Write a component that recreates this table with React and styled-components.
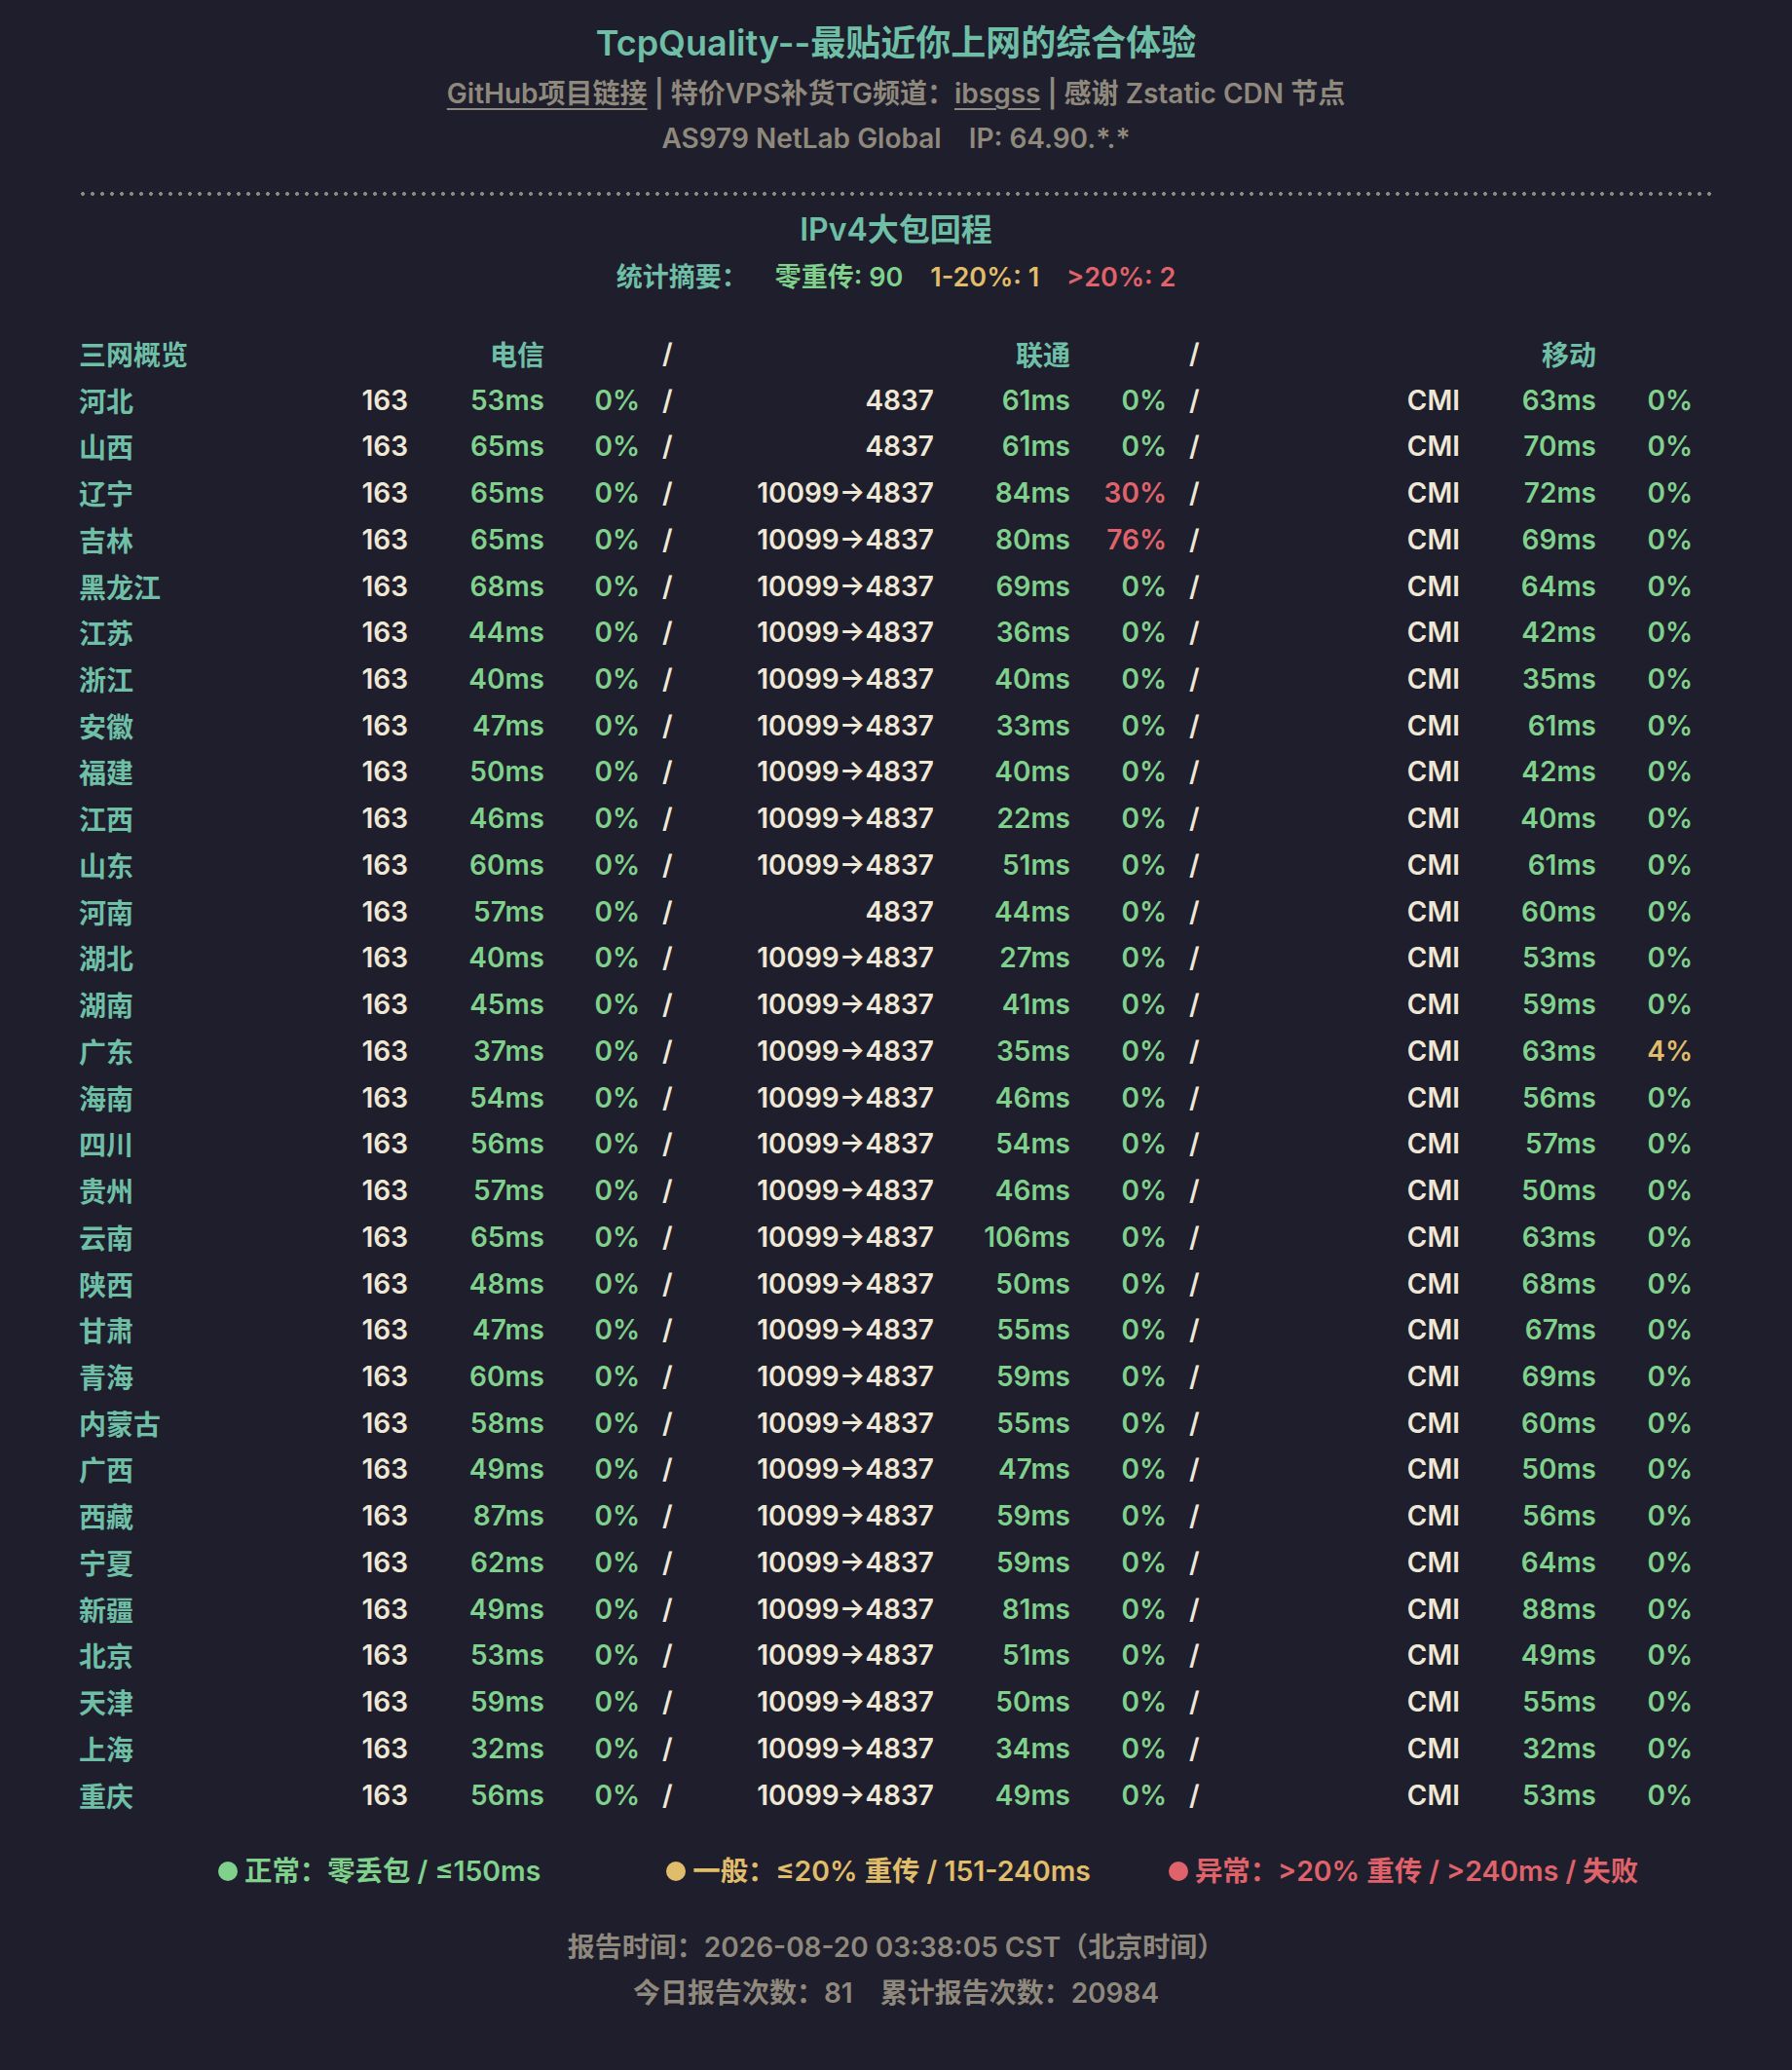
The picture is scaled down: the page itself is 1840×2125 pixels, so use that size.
import React from 'react'
import styled, { createGlobalStyle } from 'styled-components'

const colors = {
  bg: '#1f1e2c',
  teal: '#6ebfa6',
  green: '#7fd18c',
  cream: '#efe8d6',
  gray: '#8f897d',
  red: '#e0636b',
  yellow: '#e0bd6b',
}

const GlobalStyle = createGlobalStyle`
  html, body {
    margin: 0;
    padding: 0;
    background: ${colors.bg};
  }
  body {
    font-family: Inter, "Noto Sans CJK SC", sans-serif;
    font-weight: 600;
  }
`

const Page = styled.div`
  width: 1840px;
  box-sizing: border-box;
  padding: 21px 80px 55px;
  color: ${colors.cream};
`

const Title = styled.h1`
  margin: 0;
  font-size: 36px;
  line-height: 46px;
  font-weight: 600;
  text-align: center;
  color: ${colors.teal};
`

const SubLine = styled.div`
  margin-top: ${(p) => p.$mt || 0}px;
  font-size: 28px;
  line-height: 46px;
  text-align: center;
  color: ${colors.gray};
  white-space: pre;
`

const UnderLink = styled.a`
  color: inherit;
  text-decoration: underline;
  text-decoration-thickness: 2px;
  text-underline-offset: 5px;
`

const Spacer = styled.span`
  display: inline-block;
  width: ${(p) => p.$w}px;
`

const Divider = styled.div`
  margin-top: 32px;
  height: 4px;
  background-image: radial-gradient(circle, ${colors.gray} 1.8px, transparent 2.2px);
  background-size: 10px 4px;
  background-repeat: repeat-x;
  background-position: 0 0;
`

const SectionTitle = styled.h2`
  margin: 13px 0 0;
  font-size: 32px;
  line-height: 44px;
  font-weight: 600;
  text-align: center;
  color: ${colors.teal};
`

const Summary = styled.div`
  margin-top: 5px;
  display: flex;
  justify-content: center;
  gap: 28px;
  font-size: 27px;
  line-height: 44px;
`

const Tone = styled.span`
  color: ${(p) => colors[p.$tone]};
  white-space: pre;
`

const Table = styled.div`
  margin-top: 32px;
  padding-left: 1px;
  display: grid;
  grid-template-columns: 138px 200px 140px 98px 60px 242px 140px 99px 60px 241px 140px 99px;
  grid-auto-rows: 47.74px;
  align-items: center;
  font-size: 28px;
`

const Cell = styled.div`
  text-align: ${(p) => (p.$left ? 'left' : 'right')};
  color: ${(p) => colors[p.$tone || 'cream']};
  white-space: nowrap;
`

const Slash = styled.div`
  padding-left: 23px;
  color: ${colors.cream};
`

const Legend = styled.div`
  margin-top: 32px;
  padding-left: 144px;
  display: flex;
  align-items: center;
  font-size: 28.4px;
  line-height: 44px;
`

const LegendItem = styled.div`
  display: flex;
  align-items: center;
  gap: 7px;
  margin-right: ${(p) => p.$mr || 0}px;
  color: ${(p) => colors[p.$tone]};
  white-space: pre;
`

const Dot = styled.span`
  width: 20px;
  height: 20px;
  border-radius: 50%;
  background: ${(p) => colors[p.$tone]};
`

const Footer = styled.div`
  margin-top: 33px;
  text-align: center;
  color: ${colors.gray};
  font-size: 28px;
  line-height: 47px;
  white-space: pre;
`

const rows = [
  ['河北', 53, 0, false, 61, 0, 63, 0],
  ['山西', 65, 0, false, 61, 0, 70, 0],
  ['辽宁', 65, 0, true, 84, 30, 72, 0],
  ['吉林', 65, 0, true, 80, 76, 69, 0],
  ['黑龙江', 68, 0, true, 69, 0, 64, 0],
  ['江苏', 44, 0, true, 36, 0, 42, 0],
  ['浙江', 40, 0, true, 40, 0, 35, 0],
  ['安徽', 47, 0, true, 33, 0, 61, 0],
  ['福建', 50, 0, true, 40, 0, 42, 0],
  ['江西', 46, 0, true, 22, 0, 40, 0],
  ['山东', 60, 0, true, 51, 0, 61, 0],
  ['河南', 57, 0, false, 44, 0, 60, 0],
  ['湖北', 40, 0, true, 27, 0, 53, 0],
  ['湖南', 45, 0, true, 41, 0, 59, 0],
  ['广东', 37, 0, true, 35, 0, 63, 4],
  ['海南', 54, 0, true, 46, 0, 56, 0],
  ['四川', 56, 0, true, 54, 0, 57, 0],
  ['贵州', 57, 0, true, 46, 0, 50, 0],
  ['云南', 65, 0, true, 106, 0, 63, 0],
  ['陕西', 48, 0, true, 50, 0, 68, 0],
  ['甘肃', 47, 0, true, 55, 0, 67, 0],
  ['青海', 60, 0, true, 59, 0, 69, 0],
  ['内蒙古', 58, 0, true, 55, 0, 60, 0],
  ['广西', 49, 0, true, 47, 0, 50, 0],
  ['西藏', 87, 0, true, 59, 0, 56, 0],
  ['宁夏', 62, 0, true, 59, 0, 64, 0],
  ['新疆', 49, 0, true, 81, 0, 88, 0],
  ['北京', 53, 0, true, 51, 0, 49, 0],
  ['天津', 59, 0, true, 50, 0, 55, 0],
  ['上海', 32, 0, true, 34, 0, 32, 0],
  ['重庆', 56, 0, true, 49, 0, 53, 0],
]

const msTone = (ms) => (ms <= 150 ? 'green' : ms <= 240 ? 'yellow' : 'red')
const pctTone = (p) => (p === 0 ? 'green' : p <= 20 ? 'yellow' : 'red')

function Carrier({ asn, ms, pct }) {
  return (
    <>
      <Cell>{asn}</Cell>
      <Cell $tone={msTone(ms)}>{ms}ms</Cell>
      <Cell $tone={pctTone(pct)}>{pct}%</Cell>
    </>
  )
}

function App() {
  return (
    <Page>
      <GlobalStyle />
      <Title>TcpQuality--最贴近你上网的综合体验</Title>
      <SubLine $mt={6}>
        <UnderLink href="#">GitHub项目链接</UnderLink> | 特价VPS补货TG频道：<UnderLink href="#">ibsgss</UnderLink> | 感谢 Zstatic CDN 节点
      </SubLine>
      <SubLine>
        AS979 NetLab Global<Spacer $w={28} />IP: 64.90.*.*
      </SubLine>

      <Divider />

      <SectionTitle>IPv4大包回程</SectionTitle>
      <Summary>
        <Tone $tone="teal">统计摘要：</Tone>
        <Tone $tone="green">零重传: 90</Tone>
        <Tone $tone="yellow">1-20%: 1</Tone>
        <Tone $tone="red">&gt;20%: 2</Tone>
      </Summary>

      <Table>
        <Cell $left $tone="teal">三网概览</Cell>
        <Cell />
        <Cell $tone="teal">电信</Cell>
        <Cell />
        <Slash>/</Slash>
        <Cell />
        <Cell $tone="teal">联通</Cell>
        <Cell />
        <Slash>/</Slash>
        <Cell />
        <Cell $tone="teal">移动</Cell>
        <Cell />
        {rows.map(([name, tMs, tPct, via, uMs, uPct, mMs, mPct]) => (
          <React.Fragment key={name}>
            <Cell $left $tone="teal">{name}</Cell>
            <Carrier asn="163" ms={tMs} pct={tPct} />
            <Slash>/</Slash>
            <Carrier asn={via ? '10099→4837' : '4837'} ms={uMs} pct={uPct} />
            <Slash>/</Slash>
            <Carrier asn="CMI" ms={mMs} pct={mPct} />
          </React.Fragment>
        ))}
      </Table>

      <Legend>
        <LegendItem $tone="green" $mr={129}>
          <Dot $tone="green" />正常：零丢包 / ≤150ms
        </LegendItem>
        <LegendItem $tone="yellow" $mr={80}>
          <Dot $tone="yellow" />一般：≤20% 重传 / 151-240ms
        </LegendItem>
        <LegendItem $tone="red">
          <Dot $tone="red" />异常：&gt;20% 重传 / &gt;240ms / 失败
        </LegendItem>
      </Legend>

      <Footer>
        报告时间：2026-08-20 03:38:05 CST（北京时间）
        <br />
        今日报告次数：81<Spacer $w={28} />累计报告次数：20984
      </Footer>
    </Page>
  )
}

export default App
